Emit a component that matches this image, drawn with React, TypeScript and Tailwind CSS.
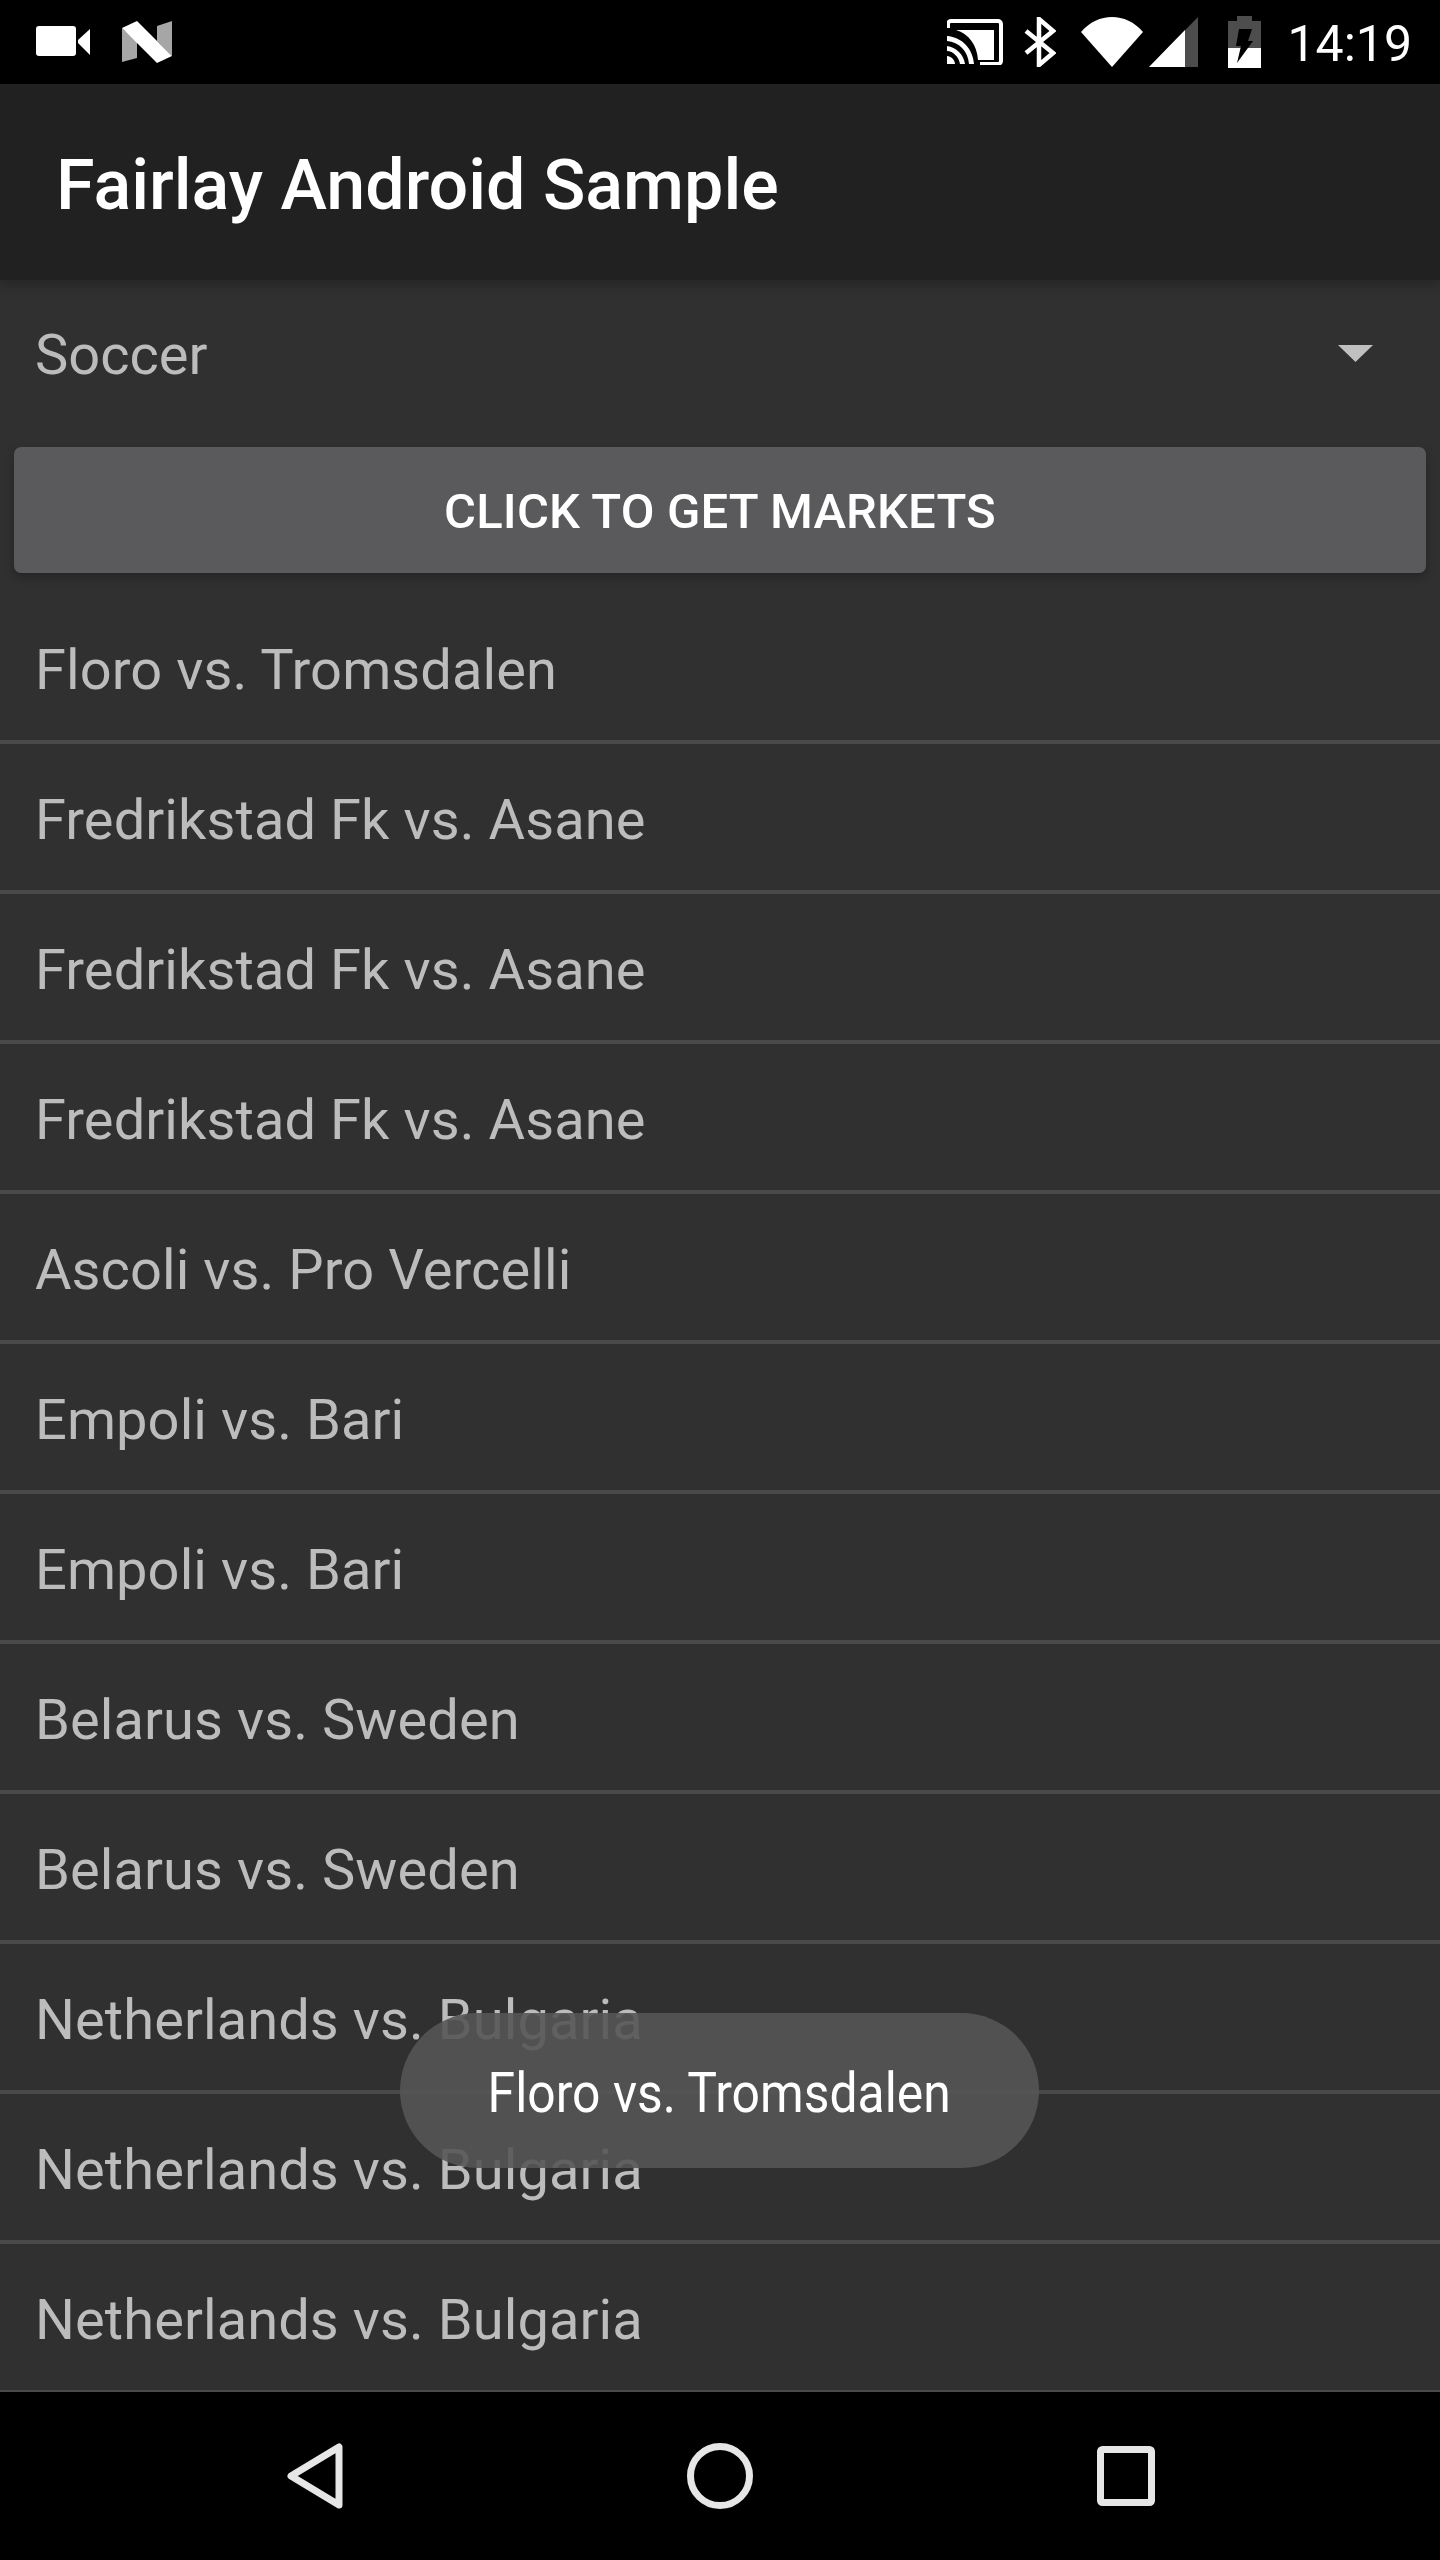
const rows = [
  "Floro vs. Tromsdalen",
  "Fredrikstad Fk vs. Asane",
  "Fredrikstad Fk vs. Asane",
  "Fredrikstad Fk vs. Asane",
  "Ascoli vs. Pro Vercelli",
  "Empoli vs. Bari",
  "Empoli vs. Bari",
  "Belarus vs. Sweden",
  "Belarus vs. Sweden",
  "Netherlands vs. Bulgaria",
  "Netherlands vs. Bulgaria",
  "Netherlands vs. Bulgaria",
];

function StatusIcons() {
  return (
    <div className="flex items-center">
      <svg width="56" height="46" viewBox="0 0 56 46">
        <path d="M1 9V5a3 3 0 0 1 3-3h47a3 3 0 0 1 3 3v37a3 3 0 0 1-3 3H33" fill="none" stroke="#fff" strokeWidth="4" />
        <path d="M9 11h38v30H31C30 26 22 15 9 11z" fill="#fff" />
        <path d="M0 17c15 1 26 13 27 28h-5C21 32 12 23 0 22zM0 27c9 1 17 9 18 18h-5C12 38 6 32 0 32zM0 37c4 0 8 4 8 8H0z" fill="#fff" />
      </svg>
      <svg width="32" height="50" viewBox="0 0 32 50" className="ml-[21px]">
        <path d="M2 14l27 22-14 12V2l14 12L2 36" fill="none" stroke="#fff" strokeWidth="4.5" />
      </svg>
      <svg width="62" height="50" viewBox="0 0 62 50" className="ml-[25px]">
        <path d="M0 15C17-5 45-5 62 15L31 50z" fill="#fff" />
      </svg>
      <svg width="49" height="50" viewBox="0 0 49 50" className="ml-[6px]">
        <path d="M49 0v50H0z" fill="#4d4d4d" />
        <path d="M36 13v37H0z" fill="#fff" />
      </svg>
      <svg width="33" height="52" viewBox="0 0 33 52" className="ml-[30px]">
        <path d="M9 0h15v5h9v47H0V5h9z" fill="#4d4d4d" />
        <path d="M0 32h33v20H0z" fill="#fff" />
        <path d="M11 13h13l-4 12h5L9 47l4-17H8z" fill="#000" />
      </svg>
      <span className="ml-[26px] pt-[3px] text-[50px] leading-none text-white">14:19</span>
    </div>
  );
}

export default function App() {
  return (
    <div className="relative flex h-[2560px] w-[1440px] flex-col overflow-hidden bg-[#303030] font-['Roboto',sans-serif]">
      <header className="flex h-[84px] shrink-0 items-center justify-between bg-black pl-[36px] pr-[28px]">
        <div className="flex items-center">
          <svg width="55" height="32" viewBox="0 0 55 32">
            <rect x="0" y="0" width="40" height="30" rx="3" fill="#fff" />
            <path d="M54 3v26L42 17v-3z" fill="#fff" />
          </svg>
          <svg width="50" height="42" viewBox="0 0 50 42" className="ml-[31px]">
            <path d="M0 7l15 14v16L0 41zM50 0v35L35 20V5z" fill="#a6a6a6" />
            <path d="M0 7l15-7 35 35-15 7z" fill="#fff" />
          </svg>
        </div>
        <StatusIcons />
      </header>
      <div className="flex h-[196px] shrink-0 items-center bg-[#212121] pl-[57px] pt-[6px] shadow-[0_6px_10px_rgba(0,0,0,0.2)]">
        <h1 className="-ml-[1px] text-[70px] font-medium leading-none text-white">Fairlay Android Sample</h1>
      </div>
      <div className="flex h-[167px] shrink-0 items-center justify-between pb-[17px] pl-[35px] pr-[67px]">
        <span className="text-[56px] leading-none text-[#bcbcbc]">Soccer</span>
        <svg width="35" height="17" viewBox="0 0 35 17" className="mt-[-4px]">
          <path d="M0 0h35L17.5 17z" fill="#c0c0c0" />
        </svg>
      </div>
      <div className="shrink-0 px-[14px]">
        <button className="flex h-[126px] w-full items-center justify-center rounded-[7px] bg-[#5a5a5c] pt-[3px] text-[49px] font-medium tracking-[0.15px] text-white shadow-[0_4px_8px_rgba(0,0,0,0.25)]">
          CLICK TO GET MARKETS
        </button>
      </div>
      <ul className="mt-[21px] min-h-0 flex-1 overflow-hidden">
        {rows.map((r, i) => (
          <li key={i} className="flex h-[150px] items-center border-b-[4px] border-[#4a4a4a] pl-[35px] pt-[6px] text-[56px] tracking-[0.08px] text-[#bcbcbc]">
            {r}
          </li>
        ))}
      </ul>
      <nav className="flex h-[168px] shrink-0 items-center bg-black pb-[1px]">
        <div className="flex w-full items-center justify-center gap-[344px] pl-[2px]">
          <svg width="56" height="66" viewBox="0 0 56 66">
            <path d="M52 4v58L4 33z" fill="none" stroke="#e6e6e6" strokeWidth="7" strokeLinejoin="round" />
          </svg>
          <svg width="66" height="66" viewBox="0 0 66 66">
            <circle cx="33" cy="33" r="29.5" fill="none" stroke="#e6e6e6" strokeWidth="7" />
          </svg>
          <svg width="58" height="60" viewBox="0 0 58 60">
            <rect x="3.5" y="3.5" width="51" height="53" rx="2" fill="none" stroke="#e6e6e6" strokeWidth="7" />
          </svg>
        </div>
      </nav>
      <div className="absolute left-[400px] top-[2013px] flex h-[155px] w-[639px] items-center justify-center rounded-full bg-[#555555]/90">
        <span className="origin-center scale-x-[0.89] whitespace-nowrap pt-[5px] text-[56px] leading-none text-white">Floro vs. Tromsdalen</span>
      </div>
    </div>
  );
}
